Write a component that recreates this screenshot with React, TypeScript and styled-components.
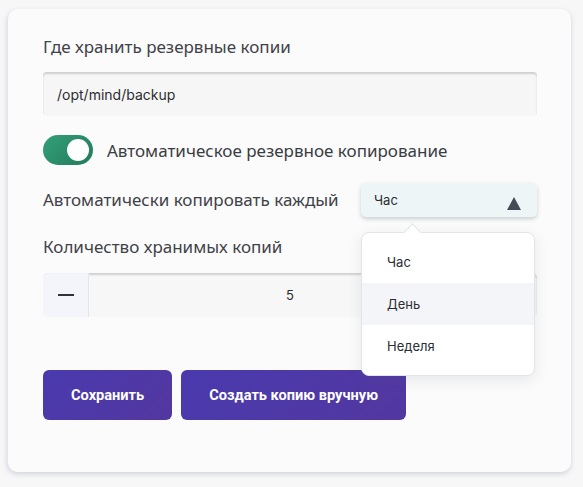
import { useState } from 'react';
import styled, { createGlobalStyle } from 'styled-components';

const Global = createGlobalStyle`
  html, body {
    margin: 0;
    background: #f7f7f8;
  }
  body {
    font-family: "Noto Sans", "Open Sans", sans-serif;
  }
  * { box-sizing: border-box; }
`;

const Page = styled.div`
  padding: 9px 12px 15px 7px;
`;

const Card = styled.div`
  width: 564px;
  height: 463px;
  background: #fbfbfb;
  border-radius: 10px;
  border-left: 1px solid #e2e5ec;
  box-shadow: 0 2px 5px rgba(120, 130, 150, 0.3);
  padding: 27px 35px 0 35px;
  display: flex;
  flex-direction: column;
`;

const Label = styled.div`
  font-size: 17px;
  color: #3f4248;
  line-height: 22px;
`;

const TextInput = styled.div`
  margin-top: 14px;
  height: 44px;
  width: 494px;
  border-radius: 4px;
  background: #f6f6f6;
  box-shadow: inset 0 2px 2px rgba(0, 0, 0, 0.16);
  display: flex;
  align-items: center;
  padding-left: 14px;
  font-family: Inter, sans-serif;
  font-size: 14px;
  color: #2b2d31;
`;

const ToggleRow = styled.div`
  margin-top: 19px;
  display: flex;
  align-items: center;
  gap: 14px;
`;

const Switch = styled.div`
  width: 50px;
  height: 30px;
  border-radius: 15px;
  background: linear-gradient(135deg, #33a07a, #237a5b);
  display: flex;
  align-items: center;
  justify-content: flex-end;
  padding-right: 4px;
`;

const Knob = styled.div`
  width: 22px;
  height: 22px;
  border-radius: 50%;
  background: #fff;
`;

const ToggleText = styled.span`
  font-size: 17px;
  color: #3a3d42;
`;

const SelectRow = styled.div`
  margin-top: 18px;
  display: flex;
  align-items: center;
  justify-content: space-between;
  width: 494px;
`;

const SelectWrap = styled.div`
  position: relative;
`;

const SelectBox = styled.div`
  width: 176px;
  height: 34px;
  border-radius: 5px;
  background: #eef5f7;
  box-shadow: 0 2px 4px rgba(90, 100, 120, 0.3);
  display: flex;
  align-items: center;
  justify-content: space-between;
  padding: 0 16px 0 13px;
  font-family: Inter, sans-serif;
  font-size: 13px;
  color: #2b2d31;
`;

const Caret = styled.span`
  width: 0;
  height: 0;
  border-left: 7px solid transparent;
  border-right: 7px solid transparent;
  border-bottom: 13px solid #454b55;
  margin-top: 7px;
`;

const Menu = styled.div`
  position: absolute;
  top: 49px;
  left: 0;
  width: 174px;
  padding: 8px 0;
  background: #fff;
  border: 1px solid #e1e4ec;
  border-radius: 8px;
  box-shadow: 0 4px 14px rgba(80, 90, 110, 0.12);
  z-index: 2;

  &::before {
    content: '';
    position: absolute;
    top: -7px;
    left: 44px;
    width: 12px;
    height: 12px;
    background: #fff;
    border-left: 1px solid #e1e4ec;
    border-top: 1px solid #e1e4ec;
    transform: rotate(45deg);
  }
`;

const MenuItem = styled.div<{ $active?: boolean }>`
  position: relative;
  height: 42px;
  display: flex;
  align-items: center;
  padding-left: 25px;
  font-family: Inter, sans-serif;
  font-size: 13px;
  color: #2b2d31;
  background: ${(p) => (p.$active ? '#f4f5f9' : 'transparent')};
`;

const CountLabel = styled(Label)`
  margin-top: 19px;
`;

const Stepper = styled.div`
  margin-top: 15px;
  width: 494px;
  height: 44px;
  display: flex;
  border-radius: 5px;
  overflow: hidden;
  background: #f7f7f7;
  box-shadow: inset 0 2px 2px rgba(0, 0, 0, 0.16);
`;

const StepButton = styled.div`
  width: 46px;
  display: flex;
  align-items: center;
  justify-content: center;
  background: #f3f5fa;
  border-right: 1px solid #e3e6ee;
`;

const Dash = styled.span`
  width: 16px;
  height: 2px;
  background: #2f3540;
`;

const StepValue = styled.div`
  flex: 1;
  display: flex;
  align-items: center;
  justify-content: center;
  font-family: Inter, sans-serif;
  font-size: 13px;
  color: #2b2d31;
  padding-right: 46px;
`;

const Actions = styled.div`
  margin-top: 53px;
  display: flex;
  gap: 9px;
`;

const Button = styled.button`
  height: 50px;
  padding: 0 28px;
  border: none;
  border-radius: 6px;
  background: linear-gradient(135deg, #4a3aae, #5237a0);
  color: #fff;
  font-family: Roboto, sans-serif;
  font-weight: 700;
  font-size: 14.6px;
`;

export default function App() {
  const [open] = useState(true);
  return (
    <Page>
      <Global />
      <Card>
        <Label>Где хранить резервные копии</Label>
        <TextInput>/opt/mind/backup</TextInput>
        <ToggleRow>
          <Switch>
            <Knob />
          </Switch>
          <ToggleText>Автоматическое резервное копирование</ToggleText>
        </ToggleRow>
        <SelectRow>
          <Label>Автоматически копировать каждый</Label>
          <SelectWrap>
            <SelectBox>
              <span>Час</span>
              <Caret />
            </SelectBox>
            {open && (
              <Menu>
                <MenuItem>Час</MenuItem>
                <MenuItem $active>День</MenuItem>
                <MenuItem>Неделя</MenuItem>
              </Menu>
            )}
          </SelectWrap>
        </SelectRow>
        <CountLabel>Количество хранимых копий</CountLabel>
        <Stepper>
          <StepButton>
            <Dash />
          </StepButton>
          <StepValue>5</StepValue>
        </Stepper>
        <Actions>
          <Button>Сохранить</Button>
          <Button>Создать копию вручную</Button>
        </Actions>
      </Card>
    </Page>
  );
}
